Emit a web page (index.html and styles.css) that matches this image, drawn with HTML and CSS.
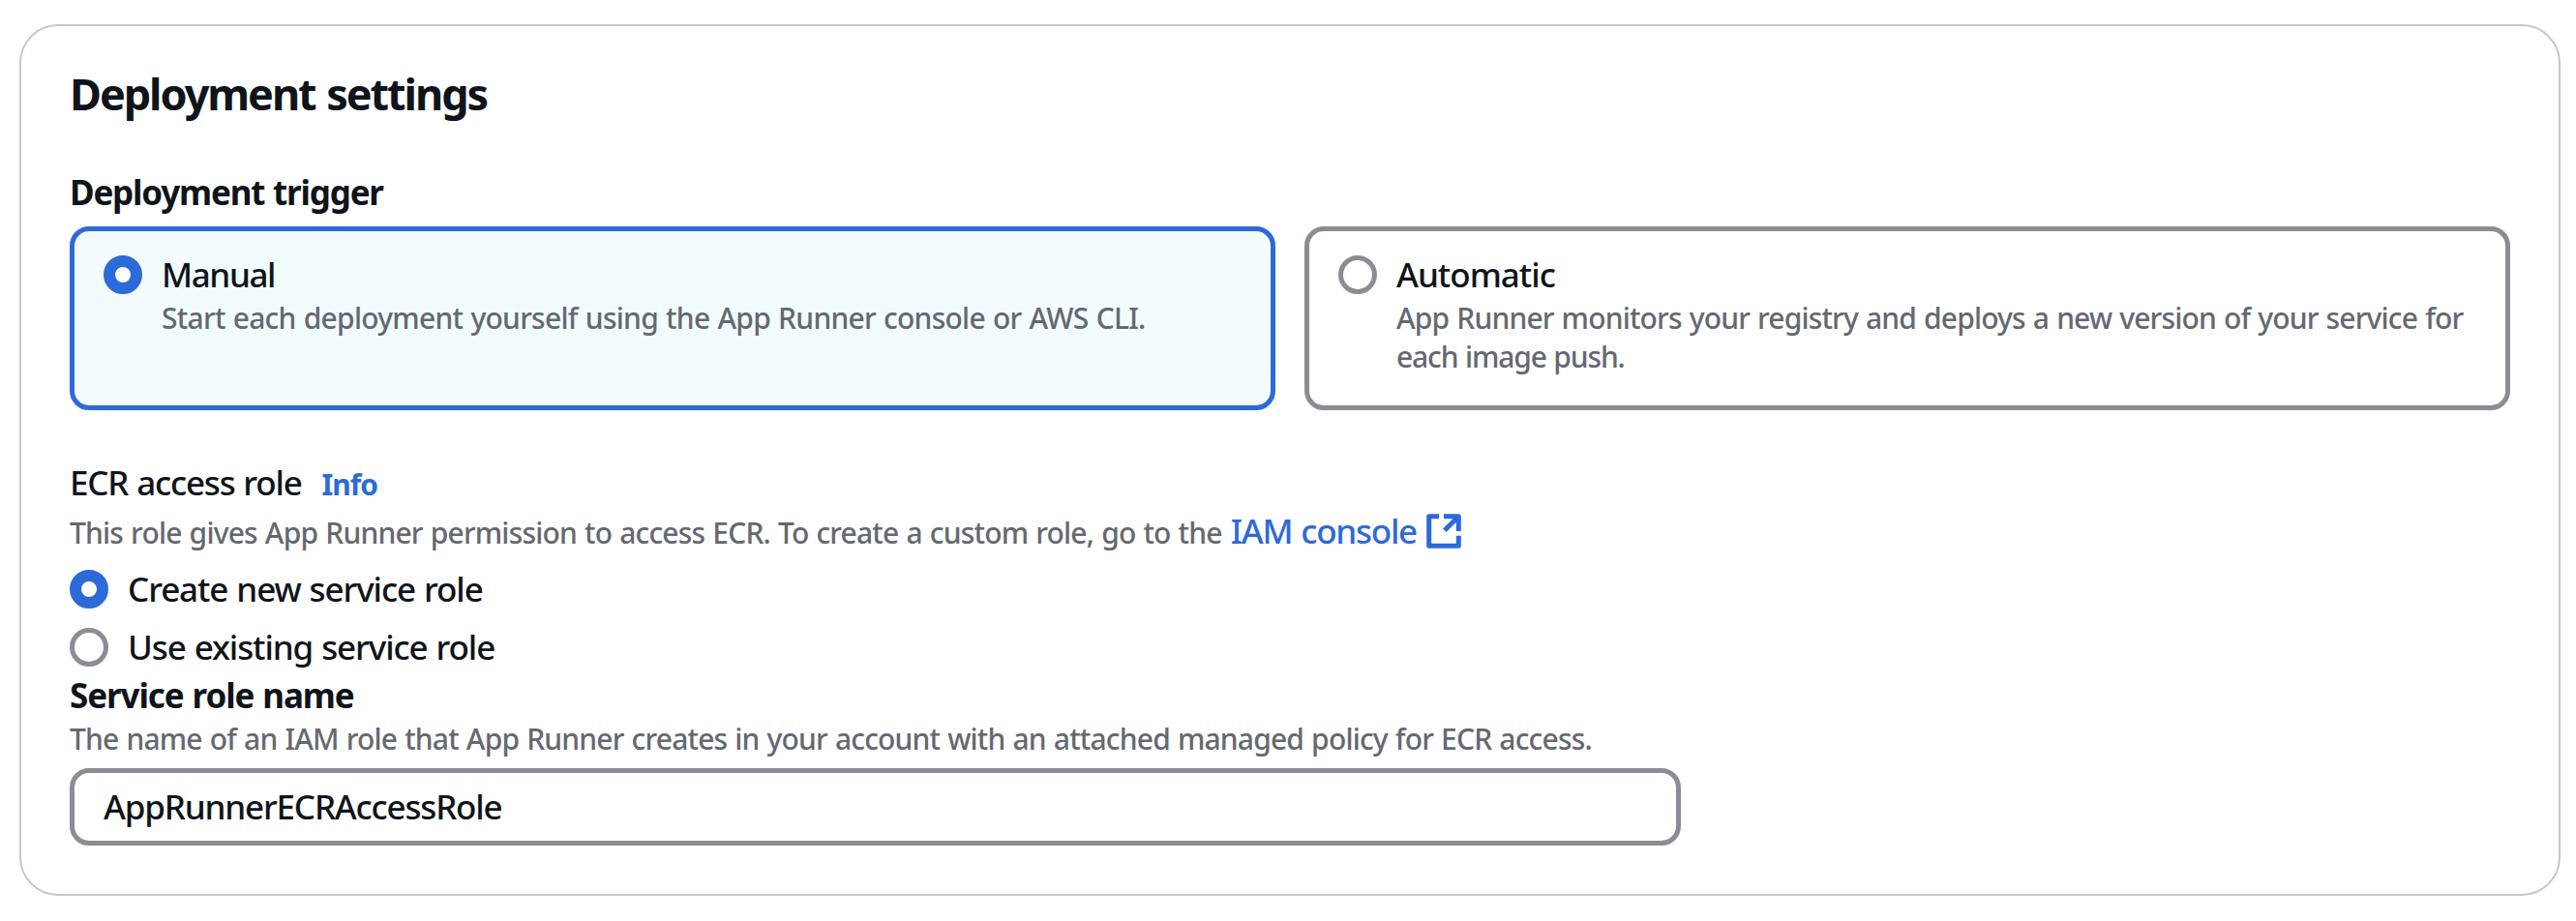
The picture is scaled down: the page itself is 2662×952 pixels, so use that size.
FILE: index.html
```html
<!DOCTYPE html>
<html lang="en">
<head>
<meta charset="utf-8">
<title>Deployment settings</title>
<link rel="stylesheet" href="styles.css">
</head>
<body>
<main class="panel">
  <h2 class="panel-title">Deployment settings</h2>

  <section class="trigger">
    <h3 class="label strong trigger-label">Deployment trigger</h3>
    <div class="tiles">
      <label class="tile selected">
        <span class="radio on"></span>
        <span class="tile-text">
          <span class="label manual-label">Manual</span>
          <span class="hint manual-hint">Start each deployment yourself using the App Runner console or AWS CLI.</span>
        </span>
      </label>
      <label class="tile">
        <span class="radio"></span>
        <span class="tile-text">
          <span class="label auto-label">Automatic</span>
          <span class="hint auto-hint">App Runner monitors your registry and deploys a new version of your service for<br><span class="auto-tail">each image push.</span></span>
        </span>
      </label>
    </div>
  </section>

  <section class="role">
    <div class="label role-label"><span>ECR access role</span><a class="info">Info</a></div>
    <div class="role-desc"><span class="small">This role gives App Runner permission to access ECR. To create a custom role, go to the</span><a class="link">IAM console</a><svg class="external" viewBox="0 0 36 36"><path d="M13 2.7H2.7V33.3H33.3V22.7M18 2.7H33.3V18M33.3 2.7L18.8 17.2"/></svg></div>
    <div class="radios">
      <label class="radio-row"><span class="radio on"></span><span class="label option">Create new service role</span></label>
      <label class="radio-row"><span class="radio"></span><span class="label option">Use existing service role</span></label>
    </div>
  </section>

  <section>
    <h3 class="label strong">Service role name</h3>
    <div class="hint name-hint">The name of an IAM role that App Runner creates in your account with an attached managed policy for ECR access.</div>
    <div class="input">AppRunnerECRAccessRole</div>
  </section>
</main>
</body>
</html>
```
FILE: styles.css
```css
* { box-sizing: border-box; }
body {
  margin: 0;
  background: #fff;
  color: #0f141a;
  font-family: "Noto Sans", "Open Sans", sans-serif;
  font-size: 35px;
  font-weight: 500;
  line-height: 50px;
}
.panel {
  width: 2626px;
  height: 901px;
  margin: 25px 0 0 20px;
  padding: 42px 50px 50px;
  border: 2px solid #c6c6cd;
  border-radius: 40px;
}
.panel-title { margin: 0; font-size: 45px; line-height: 56px; font-weight: 700; letter-spacing: -2.05px; word-spacing: 2px; }
.label { display: block; margin: 0; font-size: 35px; line-height: 50px; font-weight: 500; white-space: nowrap; }
.strong { font-weight: 700; letter-spacing: -1.1px; word-spacing: 1px; }
.trigger-label { letter-spacing: -1.2px; }
.manual-label { letter-spacing: -1.4px; }
.auto-label { letter-spacing: -1px; }
.hint { display: block; font-size: 30px; line-height: 40px; color: #656871; white-space: nowrap; word-spacing: 1px; }
.manual-hint { letter-spacing: -0.74px; }
.auto-hint { letter-spacing: -0.83px; }
.auto-tail { letter-spacing: -1.15px; }
.name-hint { letter-spacing: -0.82px; }
.trigger { margin-top: 49px; }
.tiles { display: grid; grid-template-columns: repeat(2, minmax(0, 1fr)); gap: 30px; margin-top: 10px; }
.tile {
  display: flex;
  gap: 20px;
  height: 190px;
  padding: 20px 30px;
  border: 5px solid #8c8c94;
  border-radius: 20px;
}
.tile.selected { border-color: #2d6ad9; background: #f2fcff; }
.radio {
  flex: none;
  width: 40px;
  height: 40px;
  margin-top: 5px;
  border: 5px solid #8c8c94;
  border-radius: 50%;
  background: #fff;
}
.radio.on { border: 12px solid #2d6ad9; }
.role { margin-top: 50px; }
.role-label { display: flex; align-items: baseline; height: 50px; letter-spacing: -1.2px; word-spacing: 1px; }
.info { margin-left: 21px; font-size: 30px; font-weight: 700; letter-spacing: -1px; color: #2d6ad9; }
.role-desc { display: flex; align-items: baseline; height: 50px; white-space: nowrap; }
.small { font-size: 30px; letter-spacing: -0.81px; word-spacing: 1px; color: #656871; }
.link { margin-left: 9px; letter-spacing: -1.25px; word-spacing: 1px; color: #2d6ad9; }
.external {
  align-self: flex-start;
  width: 36px;
  height: 36px;
  margin: 7px 0 0 10px;
  fill: none;
  stroke: #2d6ad9;
  stroke-width: 5;
  stroke-linejoin: round;
}
.radios { display: grid; gap: 10px; margin-top: 10px; }
.radio-row { display: flex; gap: 20px; }
.option { letter-spacing: -1.1px; word-spacing: 1px; }
.input {
  width: 1665px;
  height: 80px;
  margin-top: 10px;
  padding: 10px 30px;
  border: 5px solid #8c8c94;
  border-radius: 20px;
  letter-spacing: -1.18px;
}
```
